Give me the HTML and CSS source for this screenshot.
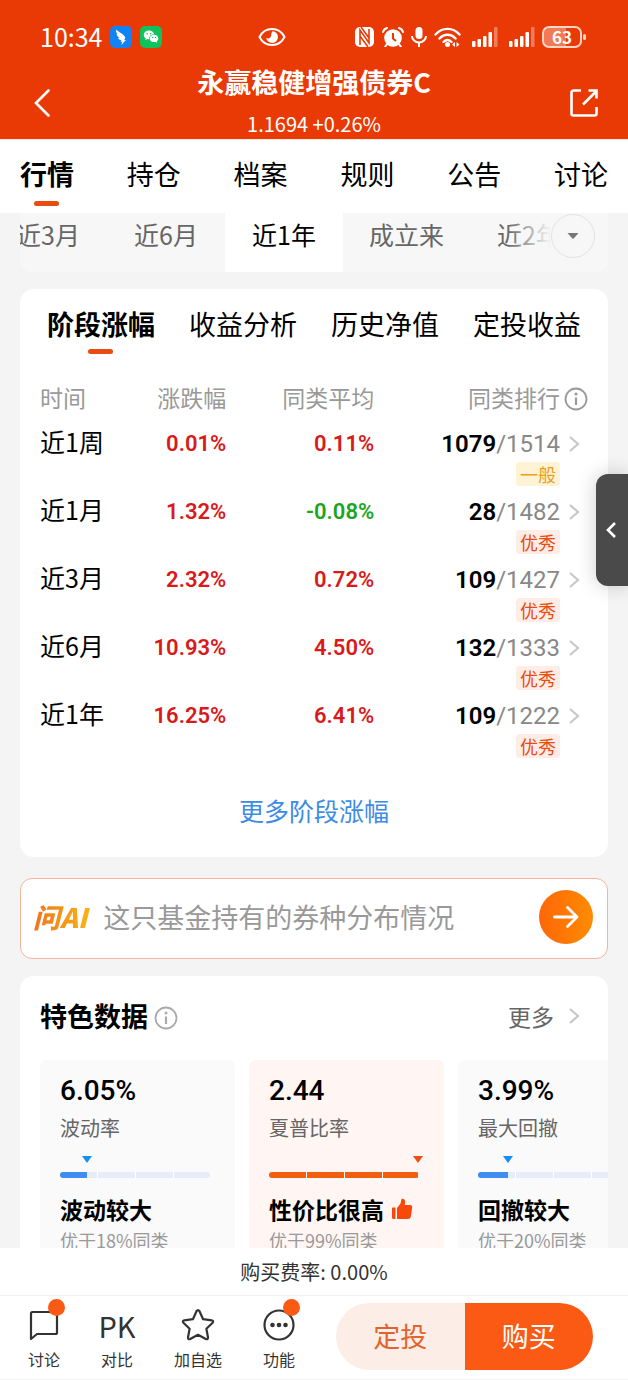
FILE: index.html
```html
<!DOCTYPE html>
<html lang="zh-CN">
<head>
  <meta charset="UTF-8">
  <meta name="viewport" content="width=device-width, initial-scale=1.0">
  <title>永赢稳健增强债券C</title>
  <link rel="stylesheet" href="styles.css">
</head>
<body>
  <header class="header">
    <div class="status-bar">
      <span class="time">10:34</span>
      <svg class="app-icon" viewBox="0 0 22 22" width="22" height="22">
        <rect width="22" height="22" rx="5" fill="#1283f5"/>
        <path d="M6 3.500c1 1.800 6.500 3.500 9 7.200.5.9 0 2-.7 3.200h1.600l-4.500 5 .8-3.200H10.500l1-1.500c-2-.3-3-1.200-3.500-2.500l1.700.3C7.600 10.700 6.700 9.400 6.500 7.600l1.500.7C6.300 7 5.700 5 6 3.500z" fill="#fff"/>
      </svg>
      <svg class="app-icon" viewBox="0 0 22 22" width="22" height="22">
        <rect width="22" height="22" rx="5" fill="#0fc35c"/>
        <path d="M9 4.500c-3 0-5.200 2-5.200 4.400 0 1.400.8 2.600 1.900 3.400l-.5 1.700 2-1c.6.2 1.200.2 1.800.2-.3-2.800 2-5 5.200-5C13.700 6 11.500 4.500 9 4.500z" fill="#fff"/>
        <path d="M14 8.800c-2.500 0-4.400 1.600-4.400 3.600s1.900 3.700 4.400 3.700c.5 0 1-.1 1.500-.2l1.600.8-.4-1.400c1-.7 1.600-1.700 1.600-2.900 0-2-1.800-3.600-4.300-3.600z" fill="#fff"/>
        <g fill="#0fc35c"><circle cx="7.200" cy="7.800" r=".8"/><circle cx="10.600" cy="7.800" r=".8"/><circle cx="12.600" cy="11.400" r=".7"/><circle cx="15.500" cy="11.400" r=".7"/></g>
      </svg>
      <svg class="eye" viewBox="0 0 28 20" width="28" height="20">
        <path d="M1.500 10C4 5 9 2 14 2s10 3 12.500 8C24 15 19 18 14 18S4 15 1.500 10z" fill="none" stroke="#fff" stroke-width="2"/>
        <path d="M14.500 4.200a5.900 5.900 0 1 1-6.300 6.600c1.600 1.200 3.600.6 4.500-.8.900-1.500 0-3.800 1.800-5.800z" fill="#fff"/>
      </svg>
      <div class="status-right">
        <svg viewBox="0 0 20 20" width="20" height="20">
          <rect x="0" y="0" width="19" height="20" rx="5" fill="#fff"/>
          <path d="M5 18V3l9 13V2M5 9l8 11M6 0l8 11" fill="none" stroke="#e93a05" stroke-width="1.600"/>
        </svg>
        <svg viewBox="0 0 22 20" width="22" height="20">
          <circle cx="11" cy="11" r="8.800" fill="#fff"/>
          <path d="M1 5c.6-2 2-3.500 4-4M21 5c-.6-2-2-3.500-4-4M5 17l-2 3M17 17l2 3" fill="none" stroke="#fff" stroke-width="2" stroke-linecap="round"/>
          <path d="M11 6v5.500l3 2.500" fill="none" stroke="#e93a05" stroke-width="2"/>
        </svg>
        <svg viewBox="0 0 16 20" width="16" height="20">
          <rect x="4.500" y="0" width="7" height="12" rx="3.500" fill="#fff"/>
          <path d="M1 9a7 6.500 0 0 0 14 0M8 15.500V20" fill="none" stroke="#fff" stroke-width="2"/>
        </svg>
        <svg class="wifi" viewBox="0 0 27 20" width="27" height="20">
          <g fill="none" stroke="#fff" stroke-width="2.400" stroke-linecap="round"><path d="M1.500 7.500c6.500-7.500 17.500-7.500 24 0M5.500 11.500c4.500-5 11.500-5 16 0M9.500 15c2.500-2.500 5.500-2.500 8 0"/></g>
          <circle cx="13.500" cy="17.500" r="2.500" fill="#fff"/>
          <path d="M21 15v5l-3-2.500zM22.500 15v5l3-2.500z" fill="#fff"/>
        </svg>
        <svg class="signal" viewBox="0 0 26 20" width="26" height="20">
          <g fill="#fff"><rect x="0" y="14" width="3.500" height="6" rx="1"/><rect x="5.500" y="12" width="3.500" height="8" rx="1"/><rect x="11" y="9" width="3.500" height="11" rx="1"/><rect x="16.500" y="5" width="3.500" height="15" rx="1"/><rect x="22" y="0" width="3.500" height="20" rx="1" opacity=".35"/></g>
        </svg>
        <svg class="signal" viewBox="0 0 26 20" width="26" height="20">
          <g fill="#fff"><rect x="0" y="14" width="3.500" height="6" rx="1"/><rect x="5.500" y="12" width="3.500" height="8" rx="1"/><rect x="11" y="9" width="3.500" height="11" rx="1"/><rect x="16.500" y="5" width="3.500" height="15" rx="1"/><rect x="22" y="0" width="3.500" height="20" rx="1" opacity=".35"/></g>
        </svg>
        <span class="battery">63</span>
      </div>
    </div>
    <div class="title-bar">
      <button class="icon-btn back" aria-label="返回">
        <svg viewBox="0 0 16 28" width="16" height="28"><path d="M14.500 1.500L2 14l12.500 12.500" fill="none" stroke="#fff" stroke-width="2.600" stroke-linecap="round"/></svg>
      </button>
      <div class="title-text">
        <h1>永赢稳健增强债券C</h1>
        <p>1.1694 +0.26%</p>
      </div>
      <button class="icon-btn" aria-label="分享">
        <svg viewBox="0 0 30 30" width="30" height="30"><path d="M12 2.500H4.500a2 2 0 0 0-2 2v21a2 2 0 0 0 2 2h21a2 2 0 0 0 2-2V19M14 16.500L27.500 3M19.500 2.500h8v8" fill="none" stroke="#fff" stroke-width="2.600"/></svg>
      </button>
    </div>
  </header>

  <nav class="main-tabs">
    <a class="tab active" href="#">行情</a>
    <a class="tab" href="#">持仓</a>
    <a class="tab" href="#">档案</a>
    <a class="tab" href="#">规则</a>
    <a class="tab" href="#">公告</a>
    <a class="tab" href="#">讨论</a>
  </nav>

  <main class="content">
    <div class="period">
      <div class="period-list">
        <button class="period-item">近3月</button>
        <button class="period-item">近6月</button>
        <button class="period-item active">近1年</button>
        <button class="period-item">成立来</button>
        <button class="period-item">近2年</button>
      </div>
      <div class="period-more">
        <button class="more-btn" aria-label="更多区间">
          <svg viewBox="0 0 12 8" width="12" height="8"><path d="M.5 1h11L6.700 6.500q-.7.700-1.400 0z" fill="#777"/></svg>
        </button>
      </div>
    </div>

    <section class="card returns">
      <nav class="sub-tabs">
        <a class="tab active" href="#">阶段涨幅</a>
        <a class="tab" href="#">收益分析</a>
        <a class="tab" href="#">历史净值</a>
        <a class="tab" href="#">定投收益</a>
      </nav>
      <table class="returns-table">
        <thead>
          <tr>
            <th class="col-time">时间</th>
            <th class="col-rate">涨跌幅</th>
            <th class="col-avg">同类平均</th>
            <th class="col-rank">
              <div class="rank-line">同类排行<svg class="info" viewBox="0 0 24 24" width="24" height="24"><circle cx="12" cy="12" r="10.500" fill="none" stroke="#999" stroke-width="1.800"/><circle cx="12" cy="7" r="1.500" fill="#999"/><path d="M12 10.500V18" stroke="#999" stroke-width="2.200"/></svg></div>
            </th>
          </tr>
        </thead>
        <tbody>
          <tr>
            <td>近1周</td>
            <td class="num up">0.01%</td>
            <td class="num up">0.11%</td>
            <td class="rank"><a class="rank-line" href="#"><b>1079</b>/1514<svg class="arrow" viewBox="0 0 12 16" width="12" height="16"><path d="M2 1l8 7-8 7" fill="none" stroke="#c8c8c8" stroke-width="2.200"/></svg></a><span class="tag normal">一般</span></td>
          </tr>
          <tr>
            <td>近1月</td>
            <td class="num up">1.32%</td>
            <td class="num down">-0.08%</td>
            <td class="rank"><a class="rank-line" href="#"><b>28</b>/1482<svg class="arrow" viewBox="0 0 12 16" width="12" height="16"><path d="M2 1l8 7-8 7" fill="none" stroke="#c8c8c8" stroke-width="2.200"/></svg></a><span class="tag">优秀</span></td>
          </tr>
          <tr>
            <td>近3月</td>
            <td class="num up">2.32%</td>
            <td class="num up">0.72%</td>
            <td class="rank"><a class="rank-line" href="#"><b>109</b>/1427<svg class="arrow" viewBox="0 0 12 16" width="12" height="16"><path d="M2 1l8 7-8 7" fill="none" stroke="#c8c8c8" stroke-width="2.200"/></svg></a><span class="tag">优秀</span></td>
          </tr>
          <tr>
            <td>近6月</td>
            <td class="num up">10.93%</td>
            <td class="num up">4.50%</td>
            <td class="rank"><a class="rank-line" href="#"><b>132</b>/1333<svg class="arrow" viewBox="0 0 12 16" width="12" height="16"><path d="M2 1l8 7-8 7" fill="none" stroke="#c8c8c8" stroke-width="2.200"/></svg></a><span class="tag">优秀</span></td>
          </tr>
          <tr>
            <td>近1年</td>
            <td class="num up">16.25%</td>
            <td class="num up">6.41%</td>
            <td class="rank"><a class="rank-line" href="#"><b>109</b>/1222<svg class="arrow" viewBox="0 0 12 16" width="12" height="16"><path d="M2 1l8 7-8 7" fill="none" stroke="#c8c8c8" stroke-width="2.200"/></svg></a><span class="tag">优秀</span></td>
          </tr>
        </tbody>
      </table>
      <a class="more-link" href="#">更多阶段涨幅</a>
    </section>

    <form class="ask-ai">
      <label class="ai-logo" for="ask">问AI</label>
      <input id="ask" type="text" placeholder="这只基金持有的券种分布情况">
      <button class="send" type="button" aria-label="发送">
        <svg viewBox="0 0 28 24" width="28" height="24"><path d="M2.500 12H25M15.500 2.500L25 12l-9.500 9.500" fill="none" stroke="#fff" stroke-width="2.800" stroke-linecap="round" stroke-linejoin="round"/></svg>
      </button>
    </form>

    <section class="card features">
      <div class="features-head">
        <h2>特色数据</h2>
        <svg class="info" viewBox="0 0 24 24" width="24" height="24"><circle cx="12" cy="12" r="10.500" fill="none" stroke="#aaa" stroke-width="1.800"/><circle cx="12" cy="7" r="1.500" fill="#aaa"/><path d="M12 10.500V18" stroke="#aaa" stroke-width="2.200"/></svg>
        <a class="features-more" href="#">更多<svg viewBox="0 0 12 16" width="12" height="16"><path d="M2 1l8 7-8 7" fill="none" stroke="#c8c8c8" stroke-width="2.200"/></svg></a>
      </div>
      <div class="metrics">
        <div class="metric">
          <div class="metric-value">6.05%</div>
          <div class="metric-name">波动率</div>
          <div class="gauge">
            <i class="marker" style="left: 18%"></i>
            <div class="track"><div class="fill" style="width: 18%"></div></div>
          </div>
          <div class="metric-level">波动较大</div>
          <div class="metric-note">优于18%同类</div>
        </div>
        <div class="metric hot">
          <div class="metric-value">2.44</div>
          <div class="metric-name">夏普比率</div>
          <div class="gauge">
            <i class="marker" style="left: 99%"></i>
            <div class="track"><div class="fill" style="width: 99%"></div></div>
          </div>
          <div class="metric-level">性价比很高
            <svg viewBox="0 0 22 22" width="22" height="22"><path d="M1.500 9.500h3V21h-2Q1 21 1 19.500V10zM6 10l3.500-4.500.8-3.700Q10.700.5 12 .8c2.200.5 2.700 3 1.700 6.200h5.300q2.500 0 2.200 2.500l-1.300 9q-.4 2.500-2.900 2.500H6z" fill="#f9480a"/></svg>
          </div>
          <div class="metric-note">优于99%同类</div>
        </div>
        <div class="metric">
          <div class="metric-value">3.99%</div>
          <div class="metric-name">最大回撤</div>
          <div class="gauge">
            <i class="marker" style="left: 20%"></i>
            <div class="track"><div class="fill" style="width: 20%"></div></div>
          </div>
          <div class="metric-level">回撤较大</div>
          <div class="metric-note">优于20%同类</div>
        </div>
      </div>
    </section>
  </main>

  <button class="side-handle" aria-label="展开">
    <svg viewBox="0 0 12 18" width="12" height="18"><path d="M10 2L3 9l7 7" fill="none" stroke="#fff" stroke-width="2.600"/></svg>
  </button>

  <footer class="footer">
    <p class="fee">购买费率: 0.00%</p>
    <div class="actions">
      <a class="action" href="#">
        <span class="action-icon"><svg viewBox="0 0 32 32" width="32" height="32"><path d="M3 30V4.500Q3 3 4.500 3h23Q29 3 29 4.500v19Q29 25 27.500 25H9z" fill="none" stroke="#333" stroke-width="2.200" stroke-linejoin="round"/></svg><i class="dot"></i></span>
        讨论
      </a>
      <a class="action" href="#">
        <span class="action-icon pk">PK</span>
        对比
      </a>
      <a class="action" href="#">
        <span class="action-icon"><svg viewBox="0 0 34 34" width="34" height="34"><path d="M15.500 3.200q1.500-2.200 3 0l3.600 8 8.700 1.100q2.200.6.800 2.400l-6.200 6 1.600 8.800q0 2.400-2.200 1.500L17 26.800 9.200 31q-2.200.9-2.200-1.500l1.600-8.800-6.200-6q-1.400-1.800.8-2.400l8.700-1.100z" fill="none" stroke="#333" stroke-width="2.200" stroke-linejoin="round"/></svg></span>
        加自选
      </a>
      <a class="action" href="#">
        <span class="action-icon"><svg viewBox="0 0 32 32" width="32" height="32"><circle cx="16" cy="16" r="14.500" fill="none" stroke="#333" stroke-width="2.200"/><g fill="#333"><circle cx="9.500" cy="16" r="2.300"/><circle cx="16" cy="16" r="2.300"/><circle cx="22.500" cy="16" r="2.300"/></g></svg><i class="dot"></i></span>
        功能
      </a>
      <div class="trade">
        <button class="btn-plan">定投</button>
        <button class="btn-buy">购买</button>
      </div>
    </div>
  </footer>
</body>
</html>
```

FILE: styles.css
```css
* {
  box-sizing: border-box;
}
body {
  margin: 0;
  height: 100vh;
  display: flex;
  flex-direction: column;
  background: #f4f4f4;
  color: #000;
  font-family: "Noto Sans CJK SC", sans-serif;
}
h1, h2, p {
  margin: 0;
}
a {
  color: inherit;
  text-decoration: none;
}
button {
  border: 0;
  padding: 0;
  background: none;
  color: inherit;
  font-family: inherit;
  cursor: pointer;
}
svg {
  display: block;
  flex: none;
}

/* header */
.header {
  flex: none;
  background: #e93a05;
  color: #fff;
  padding-top: 16px;
  border-bottom: 1px solid #ffe6d9;
}
.status-bar {
  display: flex;
  align-items: center;
  height: 42px;
  padding: 0 46px 0 40px;
}
.time {
  margin-right: 8px;
  padding-bottom: 2px;
  font-size: 25px;
  line-height: 40px;
}
.app-icon {
  margin-right: 8px;
}
.eye {
  margin-left: 88px;
}
.status-right {
  display: flex;
  align-items: center;
  margin-left: auto;
  gap: 7px;
}
.signal {
  margin-left: 4px;
}
.battery {
  position: relative;
  width: 40px;
  border: 2px solid #ffd5c5;
  border-radius: 7px;
  background: linear-gradient(90deg, #f27a55 60%, transparent 60%);
  font-size: 17px;
  font-weight: 700;
  line-height: 18px;
  text-align: center;
}
.battery::after {
  content: "";
  position: absolute;
  right: -6px;
  top: 6px;
  width: 3px;
  height: 6px;
  border-radius: 2px;
  background: #ffd5c5;
}
.title-bar {
  display: flex;
  align-items: center;
  justify-content: space-between;
  height: 81px;
  padding: 9px 29px 0;
}
.title-text {
  padding-bottom: 5px;
  text-align: center;
}
.title-text h1 {
  font-size: 27px;
  font-weight: 700;
  line-height: 36px;
}
.title-text p {
  margin-top: 11px;
  font-size: 20px;
  line-height: 26px;
}
.icon-btn {
  display: flex;
  align-items: center;
  width: 30px;
  height: 30px;
}
.back {
  padding-left: 5px;
}

/* tabs */
.main-tabs {
  flex: none;
  display: flex;
  justify-content: space-between;
  height: 73px;
  padding: 14px 20px 0;
  background: #fff;
}
.tab {
  position: relative;
  font-size: 27px;
  line-height: 40px;
}
.tab.active {
  font-weight: 700;
}
.tab.active::after {
  content: "";
  position: absolute;
  left: 50%;
  bottom: -10px;
  width: 25px;
  height: 5px;
  margin-left: -13px;
  border-radius: 3px;
  background: #e84c10;
}
.main-tabs .tab {
  height: 42px;
}

.content {
  flex: 1;
  min-height: 0;
  overflow: auto;
  scrollbar-width: none;
  padding: 0 20px;
}

/* period strip */
.period {
  position: relative;
  height: 59px;
  overflow: hidden;
  border-radius: 0 0 12px 12px;
  background: #f7f7f7;
}
.period-list {
  display: flex;
  margin-left: -31px;
}
.period-item {
  flex: none;
  min-width: 118px;
  height: 59px;
  padding: 0 26px 17px;
  font-size: 25px;
  line-height: 42px;
  color: #666;
}
.period-item.active {
  background: #fff;
  color: #000;
}
.period-more {
  position: absolute;
  top: 0;
  right: 0;
  height: 59px;
  padding: 1px 13px 0 44px;
  background: linear-gradient(90deg, rgba(247, 247, 247, 0), #f7f7f7 44px);
}
.more-btn {
  display: flex;
  align-items: center;
  justify-content: center;
  width: 44px;
  height: 44px;
  border: 1px solid #e2e2e2;
  border-radius: 50%;
}

.card {
  border-radius: 14px;
  background: #fff;
}

/* returns */
.returns {
  margin-top: 17px;
  padding: 15px 20px 29px;
}
.sub-tabs {
  display: flex;
  justify-content: space-between;
  padding: 0 7px;
  margin-bottom: 37px;
}
.returns-table {
  width: 100%;
  table-layout: fixed;
  border-collapse: collapse;
  font-size: 25px;
  line-height: 32px;
}
.returns-table th {
  padding: 0 0 12px;
  font-size: 23px;
  font-weight: 400;
  color: #999;
  text-align: right;
}
.returns-table .col-time {
  width: 15%;
  text-align: left;
}
.col-rate {
  width: 19%;
}
.col-avg {
  width: 27%;
}
.returns-table td {
  height: 68px;
  padding: 0;
  vertical-align: top;
}
.returns-table .num {
  padding-top: 3px;
  text-align: right;
  font-family: Roboto, sans-serif;
  font-size: 22px;
  font-weight: 600;
}
.up {
  color: #d91a1a;
}
.down {
  color: #1ea51e;
}
.rank-line {
  display: flex;
  align-items: center;
  justify-content: flex-end;
}
.returns-table .rank {
  padding-top: 3px;
  font-family: Roboto, sans-serif;
  font-size: 24px;
  color: #888;
}
.rank b {
  color: #000;
  font-weight: 600;
}
.info {
  margin: 3px 0 0 4px;
}
.arrow {
  margin: 0 8px;
}
.tag {
  display: block;
  width: 44px;
  margin: 2px 28px 0 auto;
  border-radius: 3px;
  background: #feede7;
  color: #e84c10;
  font-family: "Noto Sans CJK SC", sans-serif;
  font-size: 18px;
  line-height: 24px;
  text-align: center;
}
.tag.normal {
  background: #fff3d6;
  color: #eaa01c;
}
.more-link {
  display: block;
  margin-top: 27px;
  font-size: 25px;
  line-height: 36px;
  color: #3e8be6;
  text-align: center;
}

/* ask AI */
.ask-ai {
  display: flex;
  align-items: center;
  height: 81px;
  margin: 21px 0 17px;
  padding: 0 14px 3px 12px;
  border: 1px solid #f1b49c;
  border-radius: 12px;
  background: #fff;
}
.ai-logo {
  padding-right: 4px;
  background: linear-gradient(90deg, #ee7420, #fcb414);
  -webkit-background-clip: text;
  background-clip: text;
  color: transparent;
  font-size: 27px;
  font-weight: 900;
  font-style: italic;
  line-height: 40px;
}
.ask-ai input {
  flex: 1;
  min-width: 0;
  margin-left: 12px;
  padding: 0;
  border: 0;
  outline: 0;
  background: none;
  font-family: inherit;
  font-size: 27px;
  line-height: 40px;
}
.ask-ai input::placeholder {
  color: #999;
}
.send {
  display: flex;
  align-items: center;
  justify-content: center;
  width: 54px;
  height: 54px;
  border-radius: 50%;
  background: linear-gradient(90deg, #ff6609, #ff8c00);
}

/* features */
.features {
  overflow: hidden;
  padding: 20px 0 20px 20px;
}
.features-head {
  display: flex;
  align-items: center;
  padding-right: 28px;
}
.features-head h2 {
  font-size: 27px;
  font-weight: 700;
  line-height: 40px;
}
.features-head .info {
  margin-left: 6px;
}
.features-more {
  display: flex;
  align-items: center;
  gap: 14px;
  margin-left: auto;
  font-size: 23px;
  line-height: 40px;
  color: #666;
}
.metrics {
  display: flex;
  gap: 14px;
  margin-top: 24px;
}
.metric {
  flex: none;
  width: 195px;
  padding: 11px 20px;
  border-radius: 6px;
  background: #fafafa;
  --main: #3f8df0;
  --mark: #1590f0;
  --rest: #e6edf9;
}
.metric.hot {
  background: #fff6f3;
  --main: #f25e10;
  --mark: #ee4e14;
}
.metric-value {
  font-family: Roboto, sans-serif;
  font-size: 28px;
  font-weight: 500;
  line-height: 40px;
}
.metric-name {
  margin-top: 2px;
  font-size: 20px;
  line-height: 30px;
  color: #666;
}
.gauge {
  position: relative;
  width: 150px;
  padding-top: 29px;
}
.marker {
  position: absolute;
  top: 13px;
  margin-left: -5px;
  border: 5px solid transparent;
  border-top: 7px solid var(--mark);
  border-bottom: 0;
}
.track {
  position: relative;
  height: 6px;
  overflow: hidden;
  border-radius: 3px;
  background: var(--rest);
}
.track::after {
  content: "";
  position: absolute;
  inset: 0;
  background: repeating-linear-gradient(90deg, transparent 0 37px, #fff 37px 38px);
}
.fill {
  height: 6px;
  background: var(--main);
}
.metric-level {
  display: flex;
  align-items: center;
  gap: 7px;
  margin-top: 14px;
  font-size: 23px;
  font-weight: 700;
  line-height: 34px;
  white-space: nowrap;
}
.metric-note {
  font-size: 18px;
  line-height: 28px;
  color: #999;
}

.side-handle {
  position: fixed;
  top: 474px;
  right: 0;
  display: flex;
  align-items: center;
  width: 32px;
  height: 112px;
  padding-left: 9px;
  border-radius: 12px 0 0 12px;
  background: #4a4a4a;
  box-shadow: 0 0 20px rgba(0, 0, 0, 0.2);
}

/* footer */
.footer {
  flex: none;
  border-bottom: 1px solid #f2f2f2;
  background: #fff;
  color: #333;
}
.fee {
  height: 48px;
  border-bottom: 1px solid #f2f2f2;
  font-size: 20px;
  line-height: 47px;
  text-align: center;
}
.actions {
  display: flex;
  align-items: center;
  gap: 41px;
  height: 83px;
  padding: 0 35px 2px 28px;
}
.action {
  display: flex;
  flex-direction: column;
  align-items: center;
  flex: none;
  padding-top: 4px;
  font-size: 16px;
  line-height: 22px;
}
.action-icon {
  position: relative;
  display: flex;
  align-items: center;
  height: 36px;
  margin-bottom: 5px;
}
.action .pk {
  width: 32px;
  justify-content: center;
  font-size: 29px;
}
.dot {
  position: absolute;
  top: -8px;
  right: -5px;
  width: 17px;
  height: 17px;
  border-radius: 50%;
  background: #fa5a14;
}
.trade {
  flex: 1;
  display: flex;
  height: 67px;
  overflow: hidden;
  border-radius: 34px;
}
.trade button {
  flex: 1;
  padding-bottom: 3px;
  font-size: 27px;
}
.btn-plan {
  background: #fcede6;
  color: #e0642e;
}
.trade .btn-buy {
  background: #fa5a14;
  color: #fff;
}
```
